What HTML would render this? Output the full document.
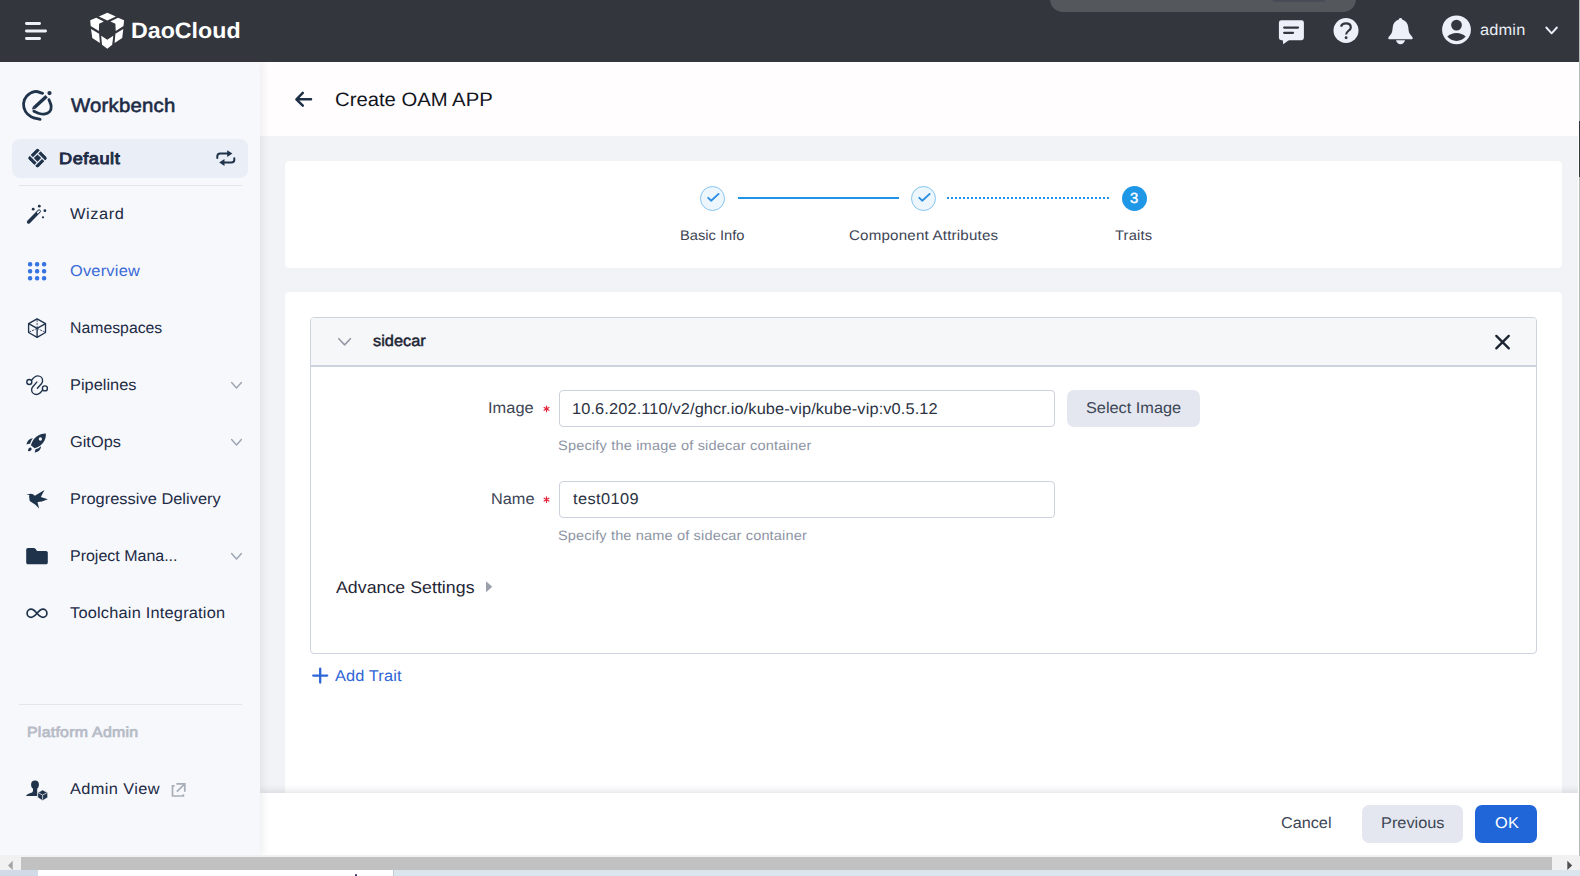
<!DOCTYPE html>
<html lang="en">
<head>
<meta charset="utf-8">
<title>Create OAM APP</title>
<style>
*{box-sizing:border-box;margin:0;padding:0}
html,body{width:1580px;height:876px;overflow:hidden;background:#f1f3f6;font-family:"Liberation Sans",sans-serif;color:#1d2b45}
.abs{position:absolute}
.t{position:absolute;white-space:nowrap;line-height:1;text-rendering:geometricPrecision}
svg{position:absolute;left:0;top:0;overflow:visible}
#hdr{left:0;top:0;width:1580px;height:62px;background:#33363c}
#side{left:0;top:62px;width:260px;height:794px;background:#f7f8fc;box-shadow:2px 0 8px rgba(30,40,70,.09)}
#main{left:260px;top:62px;width:1320px;height:794px;background:#f1f3f6}
#ph{left:260px;top:62px;width:1320px;height:74px;background:#fffdfe}
#steps{left:285px;top:161px;width:1277px;height:107px;background:#fff;border-radius:4.5px}
#form{left:285px;top:292px;width:1277px;height:520px;background:#fff;border-radius:4.5px 4.5px 0 0}
#panel{left:310px;top:317px;width:1227px;height:337px;border:1px solid #cfd3e0;border-radius:4px;background:#fff}
#panelh{left:311px;top:318px;width:1225px;height:49px;background:#f6f7f9;border-bottom:2px solid #ccd2de;border-radius:3px 3px 0 0}
#foot{left:260px;top:793px;width:1320px;height:63px;background:#fff;box-shadow:0 -2px 7px rgba(30,40,70,.13)}
#sb{left:0;top:855.3px;width:1580px;height:16px;background:#f1f1f1}
#sbthumb{left:21px;top:856.6px;width:1530.6px;height:14px;background:#c1c1c1}
#strip{left:0;top:870.4px;width:1580px;height:6px;background:#dbe5ee}
#defbox{left:12px;top:139px;width:236px;height:39px;border-radius:8px;background:#eaeef6}
.hr{height:1px;background:#e2e5ec}
.inp{border:1px solid #cdd1dd;border-radius:4px;background:#fff;height:37px;width:496px;left:558.5px}
.btn{border-radius:7px;height:37.5px;top:805px}
.stepc{width:25px;height:25px;border-radius:50%;top:185.6px}
.done{background:#edf6fd;border:1px solid #86c5f2}
</style>
</head>
<body>
<div id="main" class="abs"></div>
<div id="ph" class="abs"></div>
<div id="steps" class="abs"></div>
<div id="form" class="abs"></div>
<div id="panel" class="abs"></div>
<div id="panelh" class="abs"></div>
<div id="foot" class="abs"></div>
<div id="side" class="abs"></div>
<div id="hdr" class="abs"></div>
<div id="sb" class="abs"></div>
<div id="sbthumb" class="abs"></div>
<div id="strip" class="abs"></div>
<div class="abs" style="left:37.8px;top:870.4px;width:355.4px;height:6px;background:#fff"></div>
<div class="abs" style="left:0;top:870.4px;width:37.8px;height:6px;background:#d0dbe7"></div>
<div class="abs" style="left:355.3px;top:874.2px;width:2.2px;height:2px;background:#3d2f70;border-radius:1px 1px 0 0"></div>
<div class="abs" style="left:393px;top:870.4px;width:1px;height:6px;background:#c5ccd6"></div>
<!-- right edge sliver -->
<div class="abs" style="left:1577.7px;top:62px;width:2.3px;height:794px;background:#fff"></div>
<div class="abs" style="left:1578.8px;top:0;width:1.2px;height:856px;background:#b9b9b9"></div>
<div class="abs" style="left:1578.8px;top:120.5px;width:1.2px;height:56px;background:#33363c"></div>
<!-- top overlay -->
<div class="abs" style="left:1049.5px;top:-14px;width:306.3px;height:25.9px;border-radius:13px;background:#54575c"></div>
<div class="abs" style="left:1272px;top:-6px;width:54px;height:8px;border-radius:4px;background:#474c57"></div>
<!-- sidebar boxes -->
<div id="defbox" class="abs"></div>
<div class="abs hr" style="left:19px;top:185px;width:223px"></div>
<div class="abs hr" style="left:19px;top:704px;width:223px"></div>
<!-- steps -->
<div class="abs stepc done" style="left:699.8px"></div>
<div class="abs stepc done" style="left:910.9px"></div>
<div class="abs stepc" style="left:1122px;background:#1f97e7"></div>
<div class="abs" style="left:738px;top:196.6px;width:161px;height:2.4px;background:#1f93e8"></div>
<div class="abs" style="left:947.3px;top:196.6px;width:162px;height:2.4px;background:repeating-linear-gradient(90deg,#1f93e8 0,#1f93e8 2.1px,transparent 2.1px,transparent 4px)"></div>
<!-- inputs / buttons -->
<div class="abs inp" style="top:390px"></div>
<div class="abs inp" style="top:481px"></div>
<div class="abs btn" style="left:1067px;top:390px;width:133px;height:36.5px;background:#e4e7ef"></div>
<div class="abs btn" style="left:1362px;width:101px;background:#e4e7ef"></div>
<div class="abs btn" style="left:1475px;width:62px;background:#2166d8"></div>
<svg width="1580" height="876" viewBox="0 0 1580 876">
<!-- hamburger -->
<g stroke="#eef1f7" stroke-width="2.8" stroke-linecap="round" fill="none">
<path d="M26.4 23.5H39.6M26.4 31H45.6M26.4 38.5H39.6"/>
</g>
<!-- logo cube -->
<g fill="#ffffff">
<polygon points="107.3,12.7 115.9,16.4 107.3,20.6 98.9,16.4"/>
<polygon points="90.2,20.3 96.2,17.7 103.8,21.5 99.1,23.7 98.9,31.1 90.7,26.1"/>
<polygon points="124.1,20.3 118,17.7 110.4,21.5 115.4,23.7 115.7,31.1 123.5,26.1"/>
<polygon points="91,29 99.1,33.7 99.9,42.9 92.3,37.9"/>
<polygon points="123.3,29 115.4,33.7 114.6,42.9 122.2,37.9"/>
<polygon points="101.2,35.8 107.3,39.8 113.3,35.8 112.2,44.7 107.3,48.7 102,44.7"/>
</g>
<!-- message icon -->
<g fill="#edf0f8">
<rect x="1278.9" y="20.3" width="25" height="19.9" rx="2.4"/>
<polygon points="1282.7,39.5 1283.2,44.3 1289.8,39.5"/>
</g>
<path d="M1284.2 27.6H1298M1284.2 32.8H1293" stroke="#33363c" stroke-width="2.3" stroke-linecap="round" fill="none"/>
<!-- help -->
<circle cx="1346" cy="30.5" r="12.5" fill="#edf0f8"/>
<path d="M1341 26.6C1341.6 24.6 1343.5 23.4 1346 23.4C1348.9 23.4 1350.8 25.1 1350.8 27.4C1350.8 30.6 1346.1 31 1346.1 34.6" stroke="#33363c" stroke-width="2.2" fill="none"/>
<circle cx="1346.1" cy="37.8" r="1.45" fill="#33363c"/>
<!-- bell -->
<path d="M1398.8 19.4A1.75 1.75 0 0 1 1402.2 19.4C1405.9 20.6 1408 23.6 1408.3 27.5C1408.6 31 1409 32.7 1410.3 34.6C1411.4 36.2 1412.7 37.1 1412.7 38.2C1412.7 38.9 1412.2 39.3 1411.5 39.3H1389.5C1388.8 39.3 1388.3 38.9 1388.3 38.2C1388.3 37.1 1389.6 36.2 1390.7 34.6C1392 32.7 1392.4 31 1392.7 27.5C1393 23.6 1395.1 20.6 1398.8 19.4Z" fill="#edf0f8"/>
<path d="M1396 40.2H1405C1404.6 42.5 1402.8 44.2 1400.5 44.2C1398.2 44.2 1396.4 42.5 1396 40.2Z" fill="#edf0f8"/>
<!-- avatar -->
<circle cx="1456.5" cy="29.8" r="14.4" fill="#edf0f8"/>
<circle cx="1456.5" cy="25.1" r="5.4" fill="#33363c"/>
<path d="M1447.3 36.6C1452 31.8 1461 31.8 1465.7 36.6C1461.5 42.3 1451.5 42.3 1447.3 36.6Z" fill="#33363c"/>
<!-- header chevron -->
<path d="M1546.3 27.5L1551.6 33.3L1556.9 27.5" stroke="#edf0f8" stroke-width="1.9" fill="none" stroke-linecap="round" stroke-linejoin="round"/>
<!-- workbench icon -->
<g stroke="#1f334b" fill="none" stroke-linecap="round">
<path d="M42.63 93.30C41.29 93.00 37.23 91.08 34.59 91.54C31.95 92.00 28.65 94.05 26.80 96.06C24.96 98.07 23.75 101.00 23.54 103.60C23.33 106.19 24.29 109.46 25.55 111.64C26.80 113.82 28.65 115.37 31.08 116.66C33.50 117.96 38.61 118.97 40.12 119.43" stroke-width="2.8"/>
<path d="M48.91 99.58C49.29 100.67 51.05 104.10 51.18 106.11C51.30 108.12 50.84 110.30 49.67 111.64C48.50 112.98 46.07 113.90 44.14 114.15C42.21 114.40 39.83 113.65 38.11 113.15C36.39 112.64 34.55 111.47 33.84 111.14" stroke-width="2.8"/>
<path d="M34.4 107.4L46.6 96.2" stroke-width="3.4" stroke-linecap="butt"/>
</g>
<polygon points="32,109.6 33.1,106.1 35.7,108.8" fill="#1f334b"/>
<circle cx="49.5" cy="93.1" r="2.1" fill="#1f334b"/>
<!-- default diamond -->
<g transform="translate(37.5 158.1) rotate(45)" fill="#1f334b">
<clipPath id="dc"><rect x="-7.2" y="-7.2" width="14.4" height="14.4" rx="2.2"/></clipPath>
<g clip-path="url(#dc)">
<rect x="-7.2" y="-7.2" width="3.4" height="9.8"/>
<rect x="-2.6" y="-7.2" width="9.8" height="3.4"/>
<rect x="3.8" y="-2.6" width="3.4" height="9.8"/>
<rect x="-7.2" y="3.8" width="9.8" height="3.4"/>
<rect x="-2.6" y="-2.6" width="5.2" height="5.2"/>
</g>
</g>
<!-- swap -->
<g stroke="#1f334b" stroke-width="2" fill="none" stroke-linecap="round">
<path d="M217.3 158V156.4C217.3 154.6 218.4 153.6 220.2 153.6H228"/>
<path d="M234.3 158.2V159.8C234.3 161.6 233.2 162.6 231.4 162.6H224"/>
</g>
<polygon points="227.2,150.2 232.4,153.6 227.2,157.1" fill="#1f334b"/>
<polygon points="224.5,159.1 219.2,162.6 224.5,166" fill="#1f334b"/>
<!-- wizard -->
<path d="M28.6 221.9L39.1 211.2" stroke="#1f334b" stroke-width="3.5" stroke-linecap="round" fill="none"/>
<path d="M37.7 212.6L39.2 211.1" stroke="#f7f8fc" stroke-width="1.5" stroke-linecap="round" fill="none"/>
<g fill="#1f334b">
<circle cx="33.2" cy="209.2" r="1.4"/><circle cx="39.3" cy="206.2" r="1.4"/><circle cx="44.9" cy="210.7" r="1.4"/><circle cx="43" cy="217.3" r="1.1"/>
</g>
<!-- overview grid -->
<g fill="#3674e3">
<rect x="27.9" y="262.1" width="4.4" height="4.4" rx="2"/><rect x="34.9" y="262.1" width="4.4" height="4.4" rx="2"/><rect x="41.9" y="262.1" width="4.4" height="4.4" rx="2"/>
<rect x="27.9" y="269.1" width="4.4" height="4.4" rx="2"/><rect x="34.9" y="269.1" width="4.4" height="4.4" rx="2"/><rect x="41.9" y="269.1" width="4.4" height="4.4" rx="2"/>
<rect x="27.9" y="276" width="4.4" height="4.4" rx="2"/><rect x="34.9" y="276" width="4.4" height="4.4" rx="2"/><rect x="41.9" y="276" width="4.4" height="4.4" rx="2"/>
</g>
<!-- namespaces cube -->
<g stroke="#1f334b" stroke-width="1.35" fill="none" stroke-linejoin="round">
<polygon points="37.1,318.8 45.5,323.6 45.5,332.5 37.1,337.3 28.6,332.5 28.6,323.6"/>
<path d="M28.6 323.6L37.1 328.4L45.5 323.6M37.1 328.4V337.3"/>
<path d="M37.1 319.5V328.4M37.1 328.4L29.3 332.1M37.1 328.4L44.8 332.1" stroke-width="0.9" stroke-dasharray="2.4 0.9" opacity=".9"/>
</g>
<!-- pipelines -->
<g stroke="#1f334b" stroke-width="1.4" fill="none" stroke-linecap="round">
<circle cx="29.3" cy="382" r="2.5"/>
<circle cx="44.9" cy="388.4" r="2.5"/>
<path d="M31.7 380.2C33.6 377.5 35.4 375.9 37.7 375.9C40.4 375.9 42.6 378 42.6 380.7C42.6 382 42.2 382.8 41.4 383.7L37.4 388.3"/>
<path d="M42.5 390.2C40.6 392.9 38.8 394.5 36.5 394.5C33.8 394.5 31.6 392.4 31.6 389.7C31.6 388.4 32 387.6 32.8 386.7L36.8 382.1"/>
</g>
<!-- gitops rocket -->
<g fill="#1f334b">
<path d="M45.9 433.5C39.5 433.3 33.3 437.2 30.9 445.2L34.6 448.2C42.4 446 46.2 440 45.9 433.5Z"/>
<path d="M32.9 438.3C29.6 438.5 27.2 440.8 26.4 444.6L30.3 443.5C30.7 441.7 31.6 439.9 32.9 438.3Z"/>
<path d="M41 446.3C40.9 449.6 38.6 452 34.6 452.6L35.6 449.3C37.6 448.8 39.4 447.8 41 446.3Z"/>
<path d="M31.2 447.9C31.9 448.6 31.7 449.9 30.8 450.6C29.9 451.3 28.6 451.3 28.2 451C27.9 450.2 28.1 449 28.9 448.2C29.6 447.4 30.6 447.3 31.2 447.9Z"/>
</g>
<circle cx="40.4" cy="439" r="1.65" fill="#f7f8fc"/>
<!-- progressive delivery bird -->
<polygon fill="#1f334b" points="26.2,494.4 30.9,493.8 33,494.2 34.8,495.8 44.5,490.1 40.8,496.9 47.8,499.3 42,501.6 37.5,502 39.1,508.4 35.4,504.7 29.7,501 29.1,496.4 29.3,495"/>
<!-- folder -->
<path fill="#1f334b" d="M28 548.1H34C34.6 548.1 35 548.3 35.4 548.8L37.1 551H46C47 551 47.8 551.8 47.8 552.8V562.5C47.8 563.5 47 564.3 46 564.3H28C27 564.3 26.2 563.5 26.2 562.5V549.9C26.2 548.9 27 548.1 28 548.1Z"/>
<!-- infinity -->
<path d="M37 613.2C34.5 610.3 33 609.1 31.2 609.1A4.1 4.1 0 1 0 31.2 617.3C33 617.3 34.5 616.1 37 613.2C39.5 610.3 41 609.1 42.8 609.1A4.1 4.1 0 1 1 42.8 617.3C41 617.3 39.5 616.1 37 613.2Z" stroke="#1f334b" stroke-width="1.7" fill="none"/>
<!-- menu chevrons -->
<g stroke="#9ca4b2" stroke-width="1.45" fill="none" stroke-linecap="round" stroke-linejoin="round">
<path d="M231.6 382.6L236.5 387.9L241.4 382.6"/>
<path d="M231.6 439.6L236.5 444.9L241.4 439.6"/>
<path d="M231.6 553.6L236.5 558.9L241.4 553.6"/>
</g>
<!-- admin view -->
<g fill="#1f334b">
<ellipse cx="35" cy="784.8" rx="3.9" ry="4.2"/>
<path d="M33 787.5H37.2V795.9H26.6C26.2 795.9 26 795.4 26.4 795.1C27.5 794.2 29.5 793.4 31.2 792.8C32.6 792.3 33 791.4 33 790.2Z"/>
<polygon points="42.6,789.9 47.6,792.8 47.6,797.6 42.6,800.5 37.8,797.6 37.8,792.8" stroke="#f7f8fc" stroke-width="0.5"/>
</g>
<path d="M38.6 792.9L42.6 795.1L46.8 792.9M42.6 795.1V799.6" stroke="#f7f8fc" stroke-width="0.75" fill="none"/>
<!-- external link -->
<g stroke="#a8aeb8" stroke-width="1.7" fill="none">
<path d="M174.6 785.8H172.5V796H183.4V794.2"/>
<path d="M176.4 783.9H184.8V791.7"/>
<path d="M176.8 791.6L184.3 784.4"/>
</g>
<!-- back arrow -->
<path d="M311 99.3H297M302.8 92.9L296.4 99.3L302.8 105.7" stroke="#1f2f48" stroke-width="2.5" fill="none" stroke-linecap="round" stroke-linejoin="round"/>
<!-- step checks -->
<g stroke="#2a8ee2" stroke-width="1.9" fill="none" stroke-linecap="round" stroke-linejoin="round">
<path d="M708.2 197.8L711.1 200.7L718.6 193.9"/>
<path d="M919.3 197.8L922.2 200.7L929.7 193.9"/>
</g>
<!-- panel chevron, close -->
<path d="M338.8 338.7L344.6 344.9L350.4 338.7" stroke="#949ba8" stroke-width="1.6" fill="none" stroke-linecap="round" stroke-linejoin="round"/>
<path d="M1496.3 335.9L1508.8 348.4M1508.8 335.9L1496.3 348.4" stroke="#1c2432" stroke-width="2.3" fill="none" stroke-linecap="round"/>
<!-- required asterisks -->
<g stroke="#e0243a" stroke-width="1.2" stroke-linecap="round">
<path d="M546.5 406.1V411.7M544.1 407.5L548.9 410.3M548.9 407.5L544.1 410.3"/>
<path d="M546.5 496.8V502.4M544.1 498.2L548.9 501M548.9 498.2L544.1 501"/>
</g>
<!-- advance triangle -->
<polygon points="486,581.3 492.3,586.8 486,592.3" fill="#9aa0ac"/>
<!-- add plus -->
<path d="M313.2 675.6H327.2M320.2 668.6V682.6" stroke="#2f66d6" stroke-width="2.3" fill="none" stroke-linecap="round"/>
<!-- scrollbar arrows -->
<polygon points="8,865.5 12.7,860.7 12.7,870" fill="#a3a3a3"/>
<polygon points="1572.2,865.5 1567.3,860.7 1567.3,870" fill="#505050"/>

</svg>

<!-- TEXT -->
<div class="t" id="t_logo" style="left:131.3px;top:20.0px;font-size:22.2px;color:#ffffff;font-weight:bold;transform:scaleX(1.046);transform-origin:0 0;">DaoCloud</div>
<div class="t" id="t_admin" style="left:1480.4px;top:23.0px;font-size:15.6px;color:#e9edf5;letter-spacing:0.16px;transform:scaleX(1.050);transform-origin:0 0;">admin</div>
<div class="t" id="t_wb" style="left:70.9px;top:97.0px;font-size:19.4px;color:#1d2b45;letter-spacing:0.20px;transform:scaleX(1.050);transform-origin:0 0;-webkit-text-stroke:0.6px #1d2b45;">Workbench</div>
<div class="t" id="t_def" style="left:58.9px;top:151.0px;font-size:16.2px;color:#1d2b45;letter-spacing:0.48px;transform:scaleX(1.120);transform-origin:0 0;-webkit-text-stroke:0.9px #1d2b45;">Default</div>
<div class="t" id="t_m1" style="left:70.2px;top:207.0px;font-size:15.6px;color:#1d2b45;letter-spacing:0.54px;transform:scaleX(1.050);transform-origin:0 0;">Wizard</div>
<div class="t" id="t_m2" style="left:69.8px;top:264.0px;font-size:15.6px;color:#3a6ad6;letter-spacing:0.21px;transform:scaleX(1.050);transform-origin:0 0;">Overview</div>
<div class="t" id="t_m3" style="left:69.9px;top:321.0px;font-size:15.6px;color:#1d2b45;transform:scaleX(1.014);transform-origin:0 0;">Namespaces</div>
<div class="t" id="t_m4" style="left:69.9px;top:378.0px;font-size:15.6px;color:#1d2b45;transform:scaleX(1.050);transform-origin:0 0;">Pipelines</div>
<div class="t" id="t_m5" style="left:69.8px;top:435.0px;font-size:15.6px;color:#1d2b45;transform:scaleX(1.049);transform-origin:0 0;">GitOps</div>
<div class="t" id="t_m6" style="left:69.9px;top:492.0px;font-size:15.6px;color:#1d2b45;letter-spacing:0.03px;transform:scaleX(1.050);transform-origin:0 0;">Progressive Delivery</div>
<div class="t" id="t_m7" style="left:69.9px;top:549.0px;font-size:15.6px;color:#1d2b45;transform:scaleX(1.025);transform-origin:0 0;">Project Mana...</div>
<div class="t" id="t_m8" style="left:70.1px;top:606.0px;font-size:15.6px;color:#1d2b45;letter-spacing:0.19px;transform:scaleX(1.050);transform-origin:0 0;">Toolchain Integration</div>
<div class="t" id="t_pa" style="left:26.5px;top:726.0px;font-size:14.6px;color:#b6bbc6;letter-spacing:0.23px;transform:scaleX(1.090);transform-origin:0 0;-webkit-text-stroke:0.7px #b6bbc6;">Platform Admin</div>
<div class="t" id="t_av" style="left:70.0px;top:782.0px;font-size:15.6px;color:#1d2b45;letter-spacing:0.36px;transform:scaleX(1.050);transform-origin:0 0;">Admin View</div>
<div class="t" id="t_title" style="left:334.8px;top:91.0px;font-size:19.4px;color:#12141c;transform:scaleX(1.045);transform-origin:0 0;">Create OAM APP</div>
<div class="t" id="t_s1" style="left:680.1px;top:228.0px;font-size:14px;color:#3d4555;transform:scaleX(1.050);transform-origin:0 0;">Basic Info</div>
<div class="t" id="t_s2" style="left:849.0px;top:228.0px;font-size:14px;color:#3d4555;letter-spacing:0.18px;transform:scaleX(1.080);transform-origin:0 0;">Component Attributes</div>
<div class="t" id="t_s3" style="left:1115.4px;top:228.0px;font-size:14px;color:#3d4555;letter-spacing:0.17px;transform:scaleX(1.050);transform-origin:0 0;">Traits</div>
<div class="t" id="t_n3" style="left:1130.1px;top:192.0px;font-size:14.8px;color:#ffffff;-webkit-text-stroke:0.4px #fff;">3</div>
<div class="t" id="t_side" style="left:372.7px;top:334.0px;font-size:15.6px;color:#1f2635;transform:scaleX(1.048);transform-origin:0 0;-webkit-text-stroke:0.5px #1f2635;">sidecar</div>
<div class="t" id="t_l1" style="left:488.1px;top:401.0px;font-size:15.6px;color:#3d4656;letter-spacing:0.03px;transform:scaleX(1.050);transform-origin:0 0;">Image</div>
<div class="t" id="t_l2" style="left:490.6px;top:492.0px;font-size:15.6px;color:#3d4656;transform:scaleX(1.046);transform-origin:0 0;">Name</div>
<div class="t" id="t_i1" style="left:572.2px;top:402.0px;font-size:15.6px;color:#2b3242;letter-spacing:0.11px;transform:scaleX(1.050);transform-origin:0 0;">10.6.202.110/v2/ghcr.io/kube-vip/kube-vip:v0.5.12</div>
<div class="t" id="t_i2" style="left:572.5px;top:492.0px;font-size:15.6px;color:#2b3242;letter-spacing:0.39px;transform:scaleX(1.050);transform-origin:0 0;">test0109</div>
<div class="t" id="t_h1" style="left:558.4px;top:439.0px;font-size:13.6px;color:#8e95a5;letter-spacing:0.17px;transform:scaleX(1.070);transform-origin:0 0;">Specify the image of sidecar container</div>
<div class="t" id="t_h2" style="left:558.4px;top:529.0px;font-size:13.6px;color:#8e95a5;letter-spacing:0.14px;transform:scaleX(1.070);transform-origin:0 0;">Specify the name of sidecar container</div>
<div class="t" id="t_adv" style="left:335.8px;top:580.0px;font-size:16.9px;color:#1f2635;letter-spacing:0.03px;transform:scaleX(1.050);transform-origin:0 0;">Advance Settings</div>
<div class="t" id="t_add" style="left:335.3px;top:669.0px;font-size:15.6px;color:#2f66d6;letter-spacing:0.11px;transform:scaleX(1.050);transform-origin:0 0;">Add Trait</div>
<div class="t" id="t_cancel" style="left:1280.5px;top:816.0px;font-size:15.6px;color:#3d4656;transform:scaleX(1.040);transform-origin:0 0;">Cancel</div>
<div class="t" id="t_prev" style="left:1380.8px;top:816.0px;font-size:15.6px;color:#3d4656;transform:scaleX(1.047);transform-origin:0 0;">Previous</div>
<div class="t" id="t_ok" style="left:1494.6px;top:816.0px;font-size:15.6px;color:#ffffff;letter-spacing:0.35px;transform:scaleX(1.050);transform-origin:0 0;">OK</div>
<div class="t" id="t_sel" style="left:1085.8px;top:401.0px;font-size:15.6px;color:#3d4656;transform:scaleX(1.045);transform-origin:0 0;">Select Image</div>
</body>
</html>
